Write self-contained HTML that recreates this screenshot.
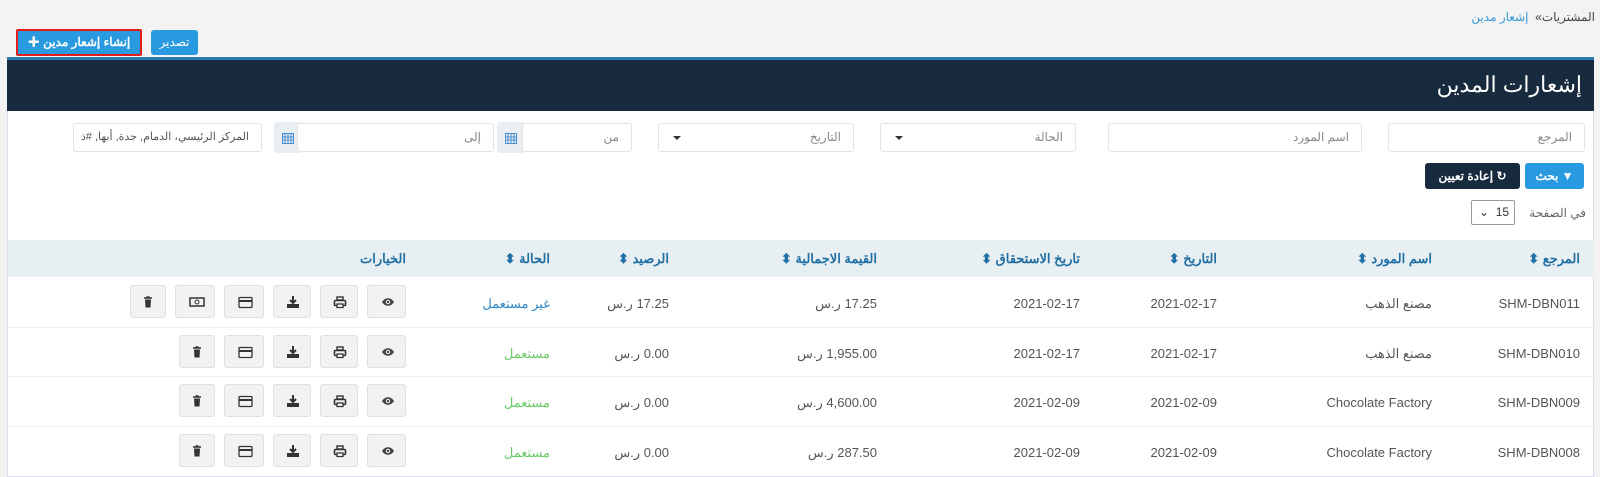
<!DOCTYPE html>
<html><head><meta charset="utf-8"><style>
*{box-sizing:border-box;margin:0;padding:0}
body{width:1600px;height:472px;background:#f3f3f3;font-family:"Liberation Sans","Noto Sans CJK SC",sans-serif;position:relative;overflow:hidden;color:#555}
.a{position:absolute}
.r{direction:rtl;white-space:nowrap}
.inp{position:absolute;background:#fff;border:1px solid #e3e3e3;border-radius:3px;height:29px;font-size:12px;color:#888;padding:0 12px;line-height:27px;direction:rtl;white-space:nowrap;overflow:hidden}
.caret{position:absolute;left:14px;top:12px;border-left:4px solid transparent;border-right:4px solid transparent;border-top:4px solid #333}
.cal{position:absolute;background:#e8eef2;height:31px;width:29px;border-radius:3px}
.btn{position:absolute;background:#f2f2f2;border:1px solid #e0e0e0;border-radius:3px;height:33px;top:0}
.th{position:absolute;top:240px;height:37px;line-height:37px;font-size:13px;font-weight:bold;color:#1f6fa3;direction:rtl;white-space:nowrap}
.td{position:absolute;font-size:13px;color:#555;white-space:nowrap;direction:rtl}
.line{position:absolute;left:8px;width:1586px;height:1px;background:#eceeef}
</style></head><body>
<div class="a r" style="right:5px;top:10px;font-size:12px;color:#444">المشتريات» <span style="color:#3a9ad9">&nbsp;إشعار مدين</span></div>
<div class="a" style="left:16px;top:29px;width:126px;height:27px;border:2px solid #e41b1b;background:#2a9ae0;border-radius:2px;color:#fff;font-size:12px;font-weight:bold;line-height:23px;text-align:center" dir="rtl">إنشاء إشعار مدين ✚</div>
<div class="a" style="left:151px;top:30px;width:47px;height:25px;background:#2a9ae0;border-radius:3px;color:#fff;font-size:12px;line-height:25px;text-align:center">تصدير</div>
<div class="a" style="left:7px;top:57px;width:1587px;height:420px;background:#fff;border:1px solid #dde"></div>
<div class="a" style="left:7px;top:57px;width:1587px;height:3px;background:#2b7bb0"></div>
<div class="a" style="left:7px;top:60px;width:1587px;height:51px;background:#172a3e"></div>
<div class="a r" style="right:18px;top:72px;font-size:22px;color:#fff">إشعارات المدين</div>

<div class="inp" style="left:1388px;top:123px;width:197px">المرجع</div>
<div class="inp" style="left:1108px;top:123px;width:254px">اسم المورد</div>
<div class="inp" style="left:880px;top:123px;width:196px">الحالة<span class="caret"></span></div>
<div class="inp" style="left:658px;top:123px;width:196px">التاريخ<span class="caret"></span></div>
<div class="cal" style="left:497px;top:122px"></div>
<div class="inp" style="left:522px;top:123px;width:110px">من</div>
<div class="cal" style="left:274px;top:122px"></div>
<div class="inp" style="left:297px;top:123px;width:197px">إلى</div>
<div class="inp" style="left:73px;top:123px;width:189px;color:#555;font-size:11px">المركز الرئيسي، الدمام, جدة, أبها, #ذ</div>
<svg class="a" style="left:505px;top:132px" width="12" height="12"><rect x="0.5" y="1.5" width="11" height="10" fill="none" stroke="#4a8fd0"/><path d="M0 5h12M0 8h12M3 2v10M6 2v10M9 2v10" stroke="#4a8fd0"/></svg>
<svg class="a" style="left:282px;top:132px" width="12" height="12"><rect x="0.5" y="1.5" width="11" height="10" fill="none" stroke="#4a8fd0"/><path d="M0 5h12M0 8h12M3 2v10M6 2v10M9 2v10" stroke="#4a8fd0"/></svg>

<div class="a r" style="left:1525px;top:163px;width:59px;height:26px;background:#2a9ae0;border-radius:3px;color:#fff;font-size:12px;font-weight:bold;line-height:26px;text-align:center">▼ بحث</div>
<div class="a r" style="left:1425px;top:163px;width:95px;height:26px;background:#172a3e;border-radius:3px;color:#fff;font-size:12px;font-weight:bold;line-height:26px;text-align:center">↻ إعادة تعيين</div>
<div class="a r" style="right:14px;top:206px;font-size:12px;color:#666">في الصفحة</div>
<div class="a" style="left:1471px;top:200px;width:44px;height:25px;border:1px solid #999;border-radius:2px;background:#fff;font-size:12px;line-height:23px;color:#333;padding-left:7px">⌄&nbsp;&nbsp;15</div>

<div class="a" style="left:8px;top:240px;width:1586px;height:37px;background:#e8eff2"></div>
<div class="th" style="right:20px">المرجع ⬍</div>
<div class="th" style="right:168px">اسم المورد ⬍</div>
<div class="th" style="right:383px">التاريخ ⬍</div>
<div class="th" style="right:520px">تاريخ الاستحقاق ⬍</div>
<div class="th" style="right:723px">القيمة الاجمالية ⬍</div>
<div class="th" style="right:931px">الرصيد ⬍</div>
<div class="th" style="right:1050px">الحالة ⬍</div>
<div class="th" style="right:1194px">الخيارات</div>

<div class="line" style="top:327px"></div><div class="line" style="top:376px"></div><div class="line" style="top:426px"></div>

<div id="rows"></div>
<script>
var rows=[["SHM-DBN011","مصنع الذهب","2021-02-17","17.25 ر.س","17.25 ر.س","غير مستعمل",1],
["SHM-DBN010","مصنع الذهب","2021-02-17","1,955.00 ر.س","0.00 ر.س","مستعمل",0],
["SHM-DBN009","Chocolate Factory","2021-02-09","4,600.00 ر.س","0.00 ر.س","مستعمل",0],
["SHM-DBN008","Chocolate Factory","2021-02-09","287.50 ر.س","0.00 ر.س","مستعمل",0]];
var ic={eye:'<path d="M1 6c3-5 9-5 12 0c-3 5-9 5-12 0z" fill="#444"/><circle cx="7" cy="6" r="2.2" fill="#f2f2f2"/><circle cx="7" cy="6" r="1.2" fill="#444"/>',
pr:'<rect x="4" y="1" width="6" height="3" fill="none" stroke="#333" stroke-width="1.4"/><rect x="1.5" y="4.5" width="11" height="5" rx="1" fill="none" stroke="#333" stroke-width="1.6"/><rect x="4" y="8" width="6" height="3.5" fill="#fff" stroke="#333" stroke-width="1.3"/>',
dl:'<path d="M7 0v6M4 4l3 3l3-3" stroke="#333" stroke-width="2" fill="none"/><rect x="1" y="8" width="12" height="4" fill="#333"/>',
cd:'<rect x="1" y="1.5" width="13" height="10" rx="1" fill="none" stroke="#333" stroke-width="1.3"/><rect x="1" y="4" width="13" height="2" fill="#333"/>',
mn:'<rect x="1" y="2" width="14" height="8" fill="none" stroke="#333" stroke-width="1.5"/><circle cx="8" cy="6" r="2" fill="none" stroke="#333"/>',
tr:'<path d="M2 2h8M4.5 1h3" stroke="#333" stroke-width="1.5"/><path d="M3 3.5h6l-.5 8h-5z" fill="#333"/>'};
var h='',ys=[277,327,376,426];
rows.forEach(function(r,i){var y=ys[i],t=y+19;
h+='<div class="td" style="right:20px;top:'+t+'px">'+r[0]+'</div>';
h+='<div class="td" style="right:168px;top:'+t+'px">'+r[1]+'</div>';
h+='<div class="td" style="right:383px;top:'+t+'px">'+r[2]+'</div>';
h+='<div class="td" style="right:520px;top:'+t+'px">'+r[2]+'</div>';
h+='<div class="td" style="right:723px;top:'+t+'px">'+r[3]+'</div>';
h+='<div class="td" style="right:931px;top:'+t+'px">'+r[4]+'</div>';
h+='<div class="td" style="right:1050px;top:'+t+'px;color:'+(r[6]?'#2f86c3':'#6cc96c')+'">'+r[5]+'</div>';
var b=r[6]?[[367,39,'eye'],[320,38,'pr'],[273,38,'dl'],[224,40,'cd'],[175,40,'mn'],[130,36,'tr']]:[[367,39,'eye'],[320,38,'pr'],[273,38,'dl'],[224,40,'cd'],[179,36,'tr']];
b.forEach(function(q){h+='<div class="btn" style="left:'+q[0]+'px;top:'+(y+8)+'px;width:'+q[1]+'px"><svg style="position:absolute;left:'+(q[1]/2-7)+'px;top:10px" width="16" height="13">'+ic[q[2]]+'</svg></div>';});
});
document.getElementById('rows').innerHTML=h;
</script>
</body></html>
